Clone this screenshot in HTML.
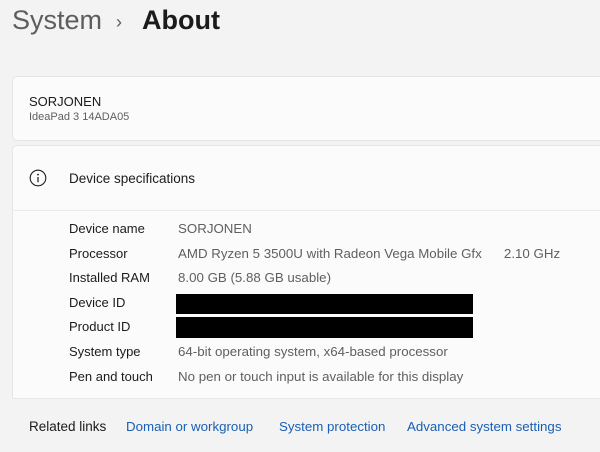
<!DOCTYPE html>
<html><head><style>
html{overflow:hidden;height:452px}
body{margin:0;width:600px;height:452px;background:#f3f3f3;font-family:"Liberation Sans",sans-serif;position:relative;overflow:hidden;color:#1b1b1b}
.a{position:absolute;white-space:nowrap}
.card{position:absolute;left:12px;width:600px;background:#fbfbfb;border:1px solid #e5e5e5;border-radius:5px}
.l{font-size:13px;left:69px}
.v{font-size:13.3px;left:178px;color:#5f5f5f}
.k{font-size:13.3px;color:#1a5fb4;top:419px}
</style></head><body>
<div class="a" style="left:12px;top:5px;font-size:27px;color:#5d5d5d">System</div>
<div class="a" style="left:116px;top:12px;font-size:18px;color:#5d5d5d">›</div>
<div class="a" style="left:142px;top:5px;font-size:27px;font-weight:bold;color:#1b1b1b">About</div>
<div class="card" style="top:76px;height:63px"></div>
<div class="a" style="left:29px;top:94px;font-size:13px">SORJONEN</div>
<div class="a" style="left:29px;top:111px;font-size:11px;color:#5f5f5f">IdeaPad 3 14ADA05</div>
<div class="card" style="top:145px;height:320px"></div>
<div class="a" style="left:12px;top:210px;width:600px;height:1px;background:#ebebeb"></div>
<div class="a" style="left:12px;top:398px;width:600px;height:60px;background:#f3f3f3;border-top:1px solid #e8e8e8"></div>
<svg class="a" style="left:29px;top:169px" width="18" height="18" viewBox="0 0 18 18"><circle cx="9" cy="9" r="7.8" fill="none" stroke="#1b1b1b" stroke-width="1.1"/><circle cx="9" cy="5.6" r="0.9" fill="#1b1b1b"/><path d="M9 8v5.2" stroke="#1b1b1b" stroke-width="1.2"/></svg>
<div class="a" style="left:69px;top:171px;font-size:13.5px">Device specifications</div>
<div class="a l" style="top:221px">Device name</div><div class="a v" style="top:221px">SORJONEN</div>
<div class="a l" style="top:246px">Processor</div><div class="a v" style="top:246px">AMD Ryzen 5 3500U with Radeon Vega Mobile Gfx&nbsp;&nbsp;&nbsp;&nbsp;&nbsp;&nbsp;2.10 GHz</div>
<div class="a l" style="top:270px">Installed RAM</div><div class="a v" style="top:270px">8.00 GB (5.88 GB usable)</div>
<div class="a l" style="top:295px">Device ID</div><div class="a" style="left:176px;top:294px;width:297px;height:20px;background:#000"></div>
<div class="a l" style="top:319px">Product ID</div><div class="a" style="left:176px;top:317px;width:297px;height:21px;background:#000"></div>
<div class="a l" style="top:344px">System type</div><div class="a v" style="top:344px">64-bit operating system, x64-based processor</div>
<div class="a l" style="top:369px">Pen and touch</div><div class="a v" style="top:369px">No pen or touch input is available for this display</div>
<div class="a" style="left:29px;top:419px;font-size:13.5px">Related links</div>
<div class="a k" style="left:126px">Domain or workgroup</div>
<div class="a k" style="left:279px">System protection</div>
<div class="a k" style="left:407px">Advanced system settings</div>
</body></html>
